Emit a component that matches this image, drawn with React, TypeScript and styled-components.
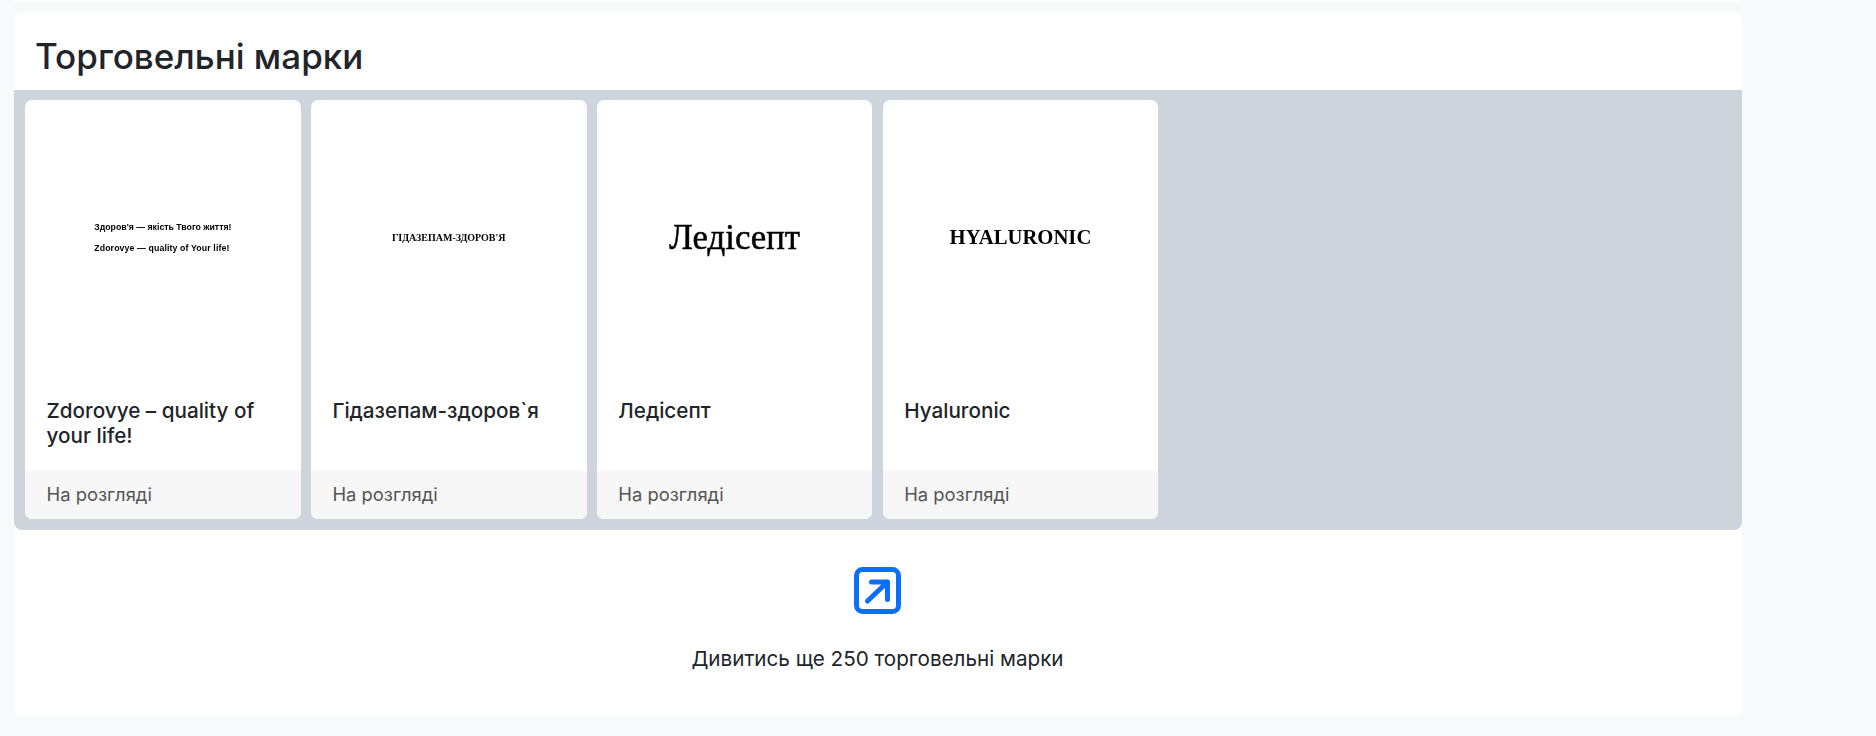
import React from "react";
import styled, { createGlobalStyle } from "styled-components";

const Global = createGlobalStyle`
  html, body { margin: 0; padding: 0; background: #f8f9fb; overflow: hidden; }
  body { font-family: Inter, "Noto Sans", sans-serif; color: #212529; }
`;

const Page = styled.main`
  width: 1728px;
  margin-left: 14px;
  display: flex;
  flex-direction: column;
  gap: 11px;
`;

const TopEdge = styled.div`
  height: 2px;
  margin-right: 2px;
  background: #fff;
  border-radius: 0 0 6px 6px;
`;

const Panel = styled.section`
  background: #fff;
  border-radius: 8px;
  height: 703px;
  display: flex;
  flex-direction: column;
`;

const Heading = styled.h2`
  margin: 0;
  height: 77px;
  box-sizing: border-box;
  padding: 21px 0 0 21px;
  font-size: 35px;
  line-height: 44px;
  font-weight: 500;
  color: #212529;
`;

const Shelf = styled.div`
  background: #cdd4dc;
  border-radius: 0 0 8px 8px;
  padding: 10px 11px 11px;
  display: grid;
  grid-template-columns: repeat(4, 275.7px);
  column-gap: 10.2px;
`;

const Card = styled.article`
  background: #fff;
  border-radius: 7px;
  overflow: hidden;
  display: flex;
  flex-direction: column;
  height: 419px;
`;

const Logo = styled.div`
  height: 275.5px;
  flex: none;
  display: flex;
  flex-direction: column;
  align-items: center;
  justify-content: center;
  color: #000;
  filter: blur(0.4px);
`;

const Slogan = styled.div`
  text-align: left;
`;

const SloganLine = styled.div<{ $spread?: boolean }>`
  font-family: "Liberation Sans", sans-serif;
  font-weight: 700;
  font-size: 8.75px;
  line-height: 21px;
  letter-spacing: ${(p) => (p.$spread ? "0.12px" : "0")};
  white-space: nowrap;
`;

const SerifMark = styled.div<{ $size: number; $bold?: boolean; $heavy?: boolean }>`
  font-family: "Liberation Serif", serif;
  font-size: ${(p) => p.$size}px;
  font-weight: ${(p) => (p.$bold ? 700 : 400)};
  -webkit-text-stroke: ${(p) => (p.$heavy ? "0.5px #000" : "0")};
  white-space: nowrap;
`;

const CardBody = styled.div`
  flex: 1;
  padding: 22px 12px 0 21.5px;
`;

const CardTitle = styled.h3`
  margin: 0;
  font-size: 20.7px;
  line-height: 25px;
  font-weight: 500;
  color: #212529;
`;

const CardFooter = styled.div`
  height: 49px;
  flex: none;
  box-sizing: border-box;
  padding: 0 21.5px 1px;
  display: flex;
  align-items: center;
  background: #f7f7f7;
  color: #555;
  font-size: 18.4px;
`;

const More = styled.a`
  flex: 1;
  display: flex;
  flex-direction: column;
  align-items: center;
  padding: 37px 1px 0 0;
  box-sizing: border-box;
  color: #212529;
  text-decoration: none;
`;

const MoreIcon = styled.svg`
  width: 47px;
  height: 47px;
  display: block;
`;

const MoreLabel = styled.span`
  margin-top: 31px;
  font-size: 20.65px;
  line-height: 28px;
`;

const brands: { title: string; logo: React.ReactNode }[] = [
  {
    title: "Zdorovye – quality of your life!",
    logo: (
      <Slogan>
        <SloganLine>Здоров'я — якість Твого життя!</SloganLine>
        <SloganLine $spread>Zdorovye — quality of Your life!</SloganLine>
      </Slogan>
    ),
  },
  { title: "Гідазепам-здоров`я", logo: <SerifMark $size={10} $bold>ГІДАЗЕПАМ-ЗДОРОВ'Я</SerifMark> },
  { title: "Ледісепт", logo: <SerifMark $size={34.8} $heavy>Ледісепт</SerifMark> },
  { title: "Hyaluronic", logo: <SerifMark $size={20.7} $bold>HYALURONIC</SerifMark> },
];

export default function App() {
  return (
    <>
      <Global />
      <Page>
        <TopEdge />
        <Panel>
          <Heading>Торговельні марки</Heading>
          <Shelf>
            {brands.map((b) => (
              <Card key={b.title}>
                <Logo>{b.logo}</Logo>
                <CardBody>
                  <CardTitle>{b.title}</CardTitle>
                </CardBody>
                <CardFooter>На розгляді</CardFooter>
              </Card>
            ))}
          </Shelf>
          <More href="#">
            <MoreIcon viewBox="0 0 47 47" fill="none" stroke="#0d6efd" strokeLinecap="round" strokeLinejoin="round">
              <rect x="2.5" y="2.5" width="42" height="42" rx="6" strokeWidth="5" />
              <path d="M13.5 34 33.5 15M17.5 15h16v17.5" strokeWidth="5" />
            </MoreIcon>
            <MoreLabel>Дивитись ще 250 торговельні марки</MoreLabel>
          </More>
        </Panel>
      </Page>
    </>
  );
}
